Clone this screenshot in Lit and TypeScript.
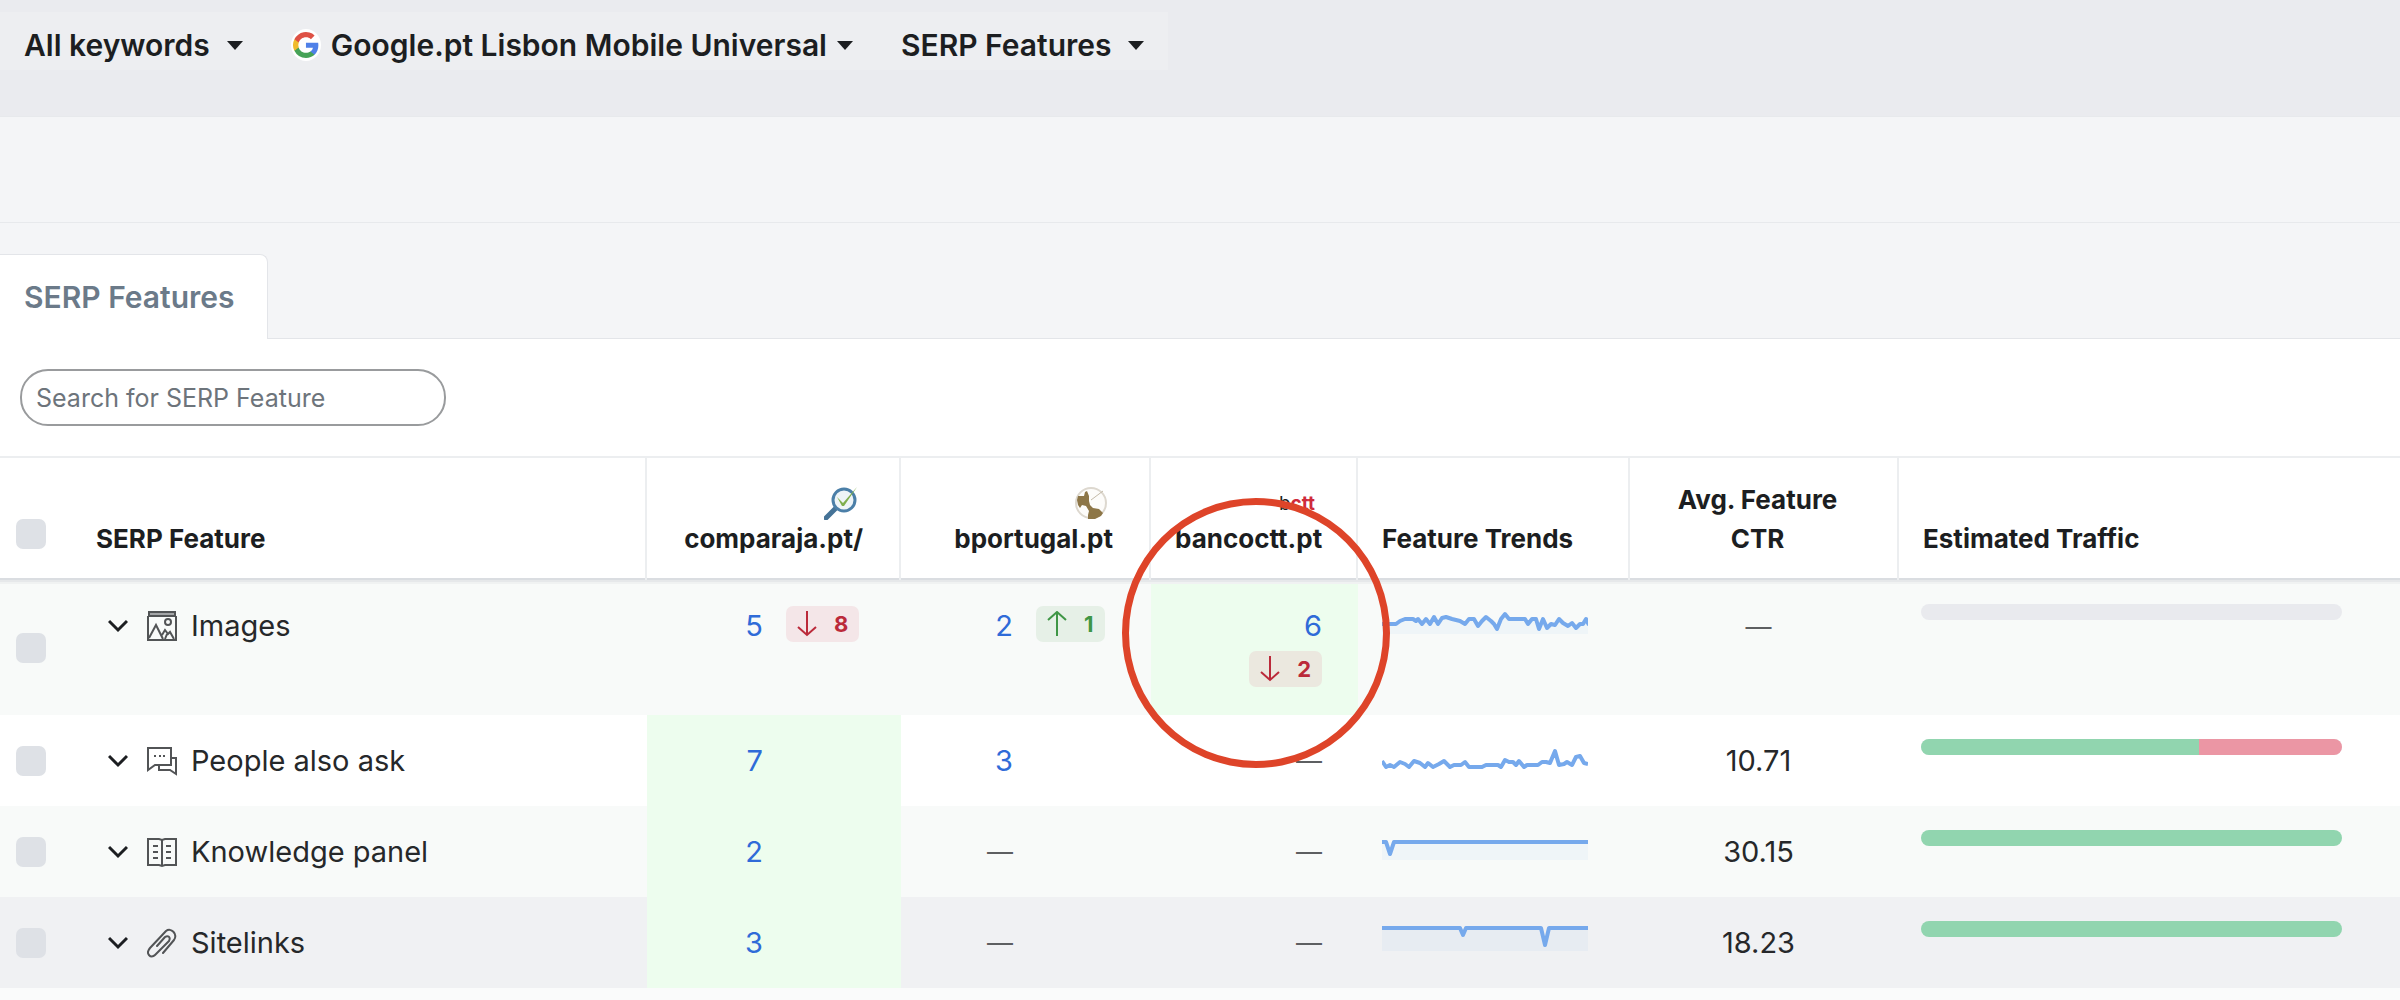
import { LitElement, html, css, svg, nothing } from "lit";
import { customElement, state } from "lit/decorators.js";

type Delta = { dir: "up" | "down"; value: number };
type Rank = { value: number | null; delta?: Delta; best?: boolean };
type Row = {
  name: string;
  icon: "images" | "ask" | "book" | "clip";
  ranks: Rank[];
  trend: string;
  fill: boolean;
  ctr: string | null;
  traffic: { tone: "good" | "bad"; share: number }[];
  tone?: "tint" | "hover";
};

const rows: Row[] = [
  {
    name: "Images",
    icon: "images",
    ranks: [
      { value: 5, delta: { dir: "down", value: 8 } },
      { value: 2, delta: { dir: "up", value: 1 } },
      { value: 6, delta: { dir: "down", value: 2 }, best: true },
    ],
    trend:
      "0,30 14,30 18,27 23,25 31,25 34,27 36,25 40,30 44,25 48,30 52,23 56,30 60,24 64,23 70,25 78,27 83,30 87,25 92,25 96,32 100,27 104,23 109,27 112,30 115,35 119,25 123,20 127,25 143,25 146,30 150,25 154,25 157,35 161,25 165,34 169,30 173,31 177,25 181,29 186,32 190,29 194,34 198,30 201,30 204,25 207,31",
    fill: true,
    ctr: null,
    traffic: [],
    tone: "tint",
  },
  {
    name: "People also ask",
    icon: "ask",
    ranks: [{ value: 7, best: true }, { value: 3 }, { value: null }],
    trend:
      "0,32 4,38 8,36 12,38 18,33 23,35 27,38 32,32 38,34 43,38 46,34 51,38 57,35 62,32 68,38 72,36 79,36 83,33 87,38 100,38 104,36 116,36 119,38 123,31 127,33 131,33 134,36 137,32 142,38 145,36 156,36 160,33 164,33 168,34 173,22 177,36 182,35 185,33 190,36 194,28 198,27 202,34 206,35",
    fill: false,
    ctr: "10.71",
    traffic: [
      { tone: "good", share: 66 },
      { tone: "bad", share: 34 },
    ],
  },
  {
    name: "Knowledge panel",
    icon: "book",
    ranks: [{ value: 2, best: true }, { value: null }, { value: null }],
    trend: "0,22 4,22 8,34 12,22 206,22",
    fill: true,
    ctr: "30.15",
    traffic: [{ tone: "good", share: 100 }],
    tone: "tint",
  },
  {
    name: "Sitelinks",
    icon: "clip",
    ranks: [{ value: 3, best: true }, { value: null }, { value: null }],
    trend: "0,17 78,17 81,24 84,17 159,17 163,34 167,17 206,17",
    fill: true,
    ctr: "18.23",
    traffic: [{ tone: "good", share: 100 }],
    tone: "hover",
  },
];

const icons = {
  images: svg`<g fill="none" stroke="currentColor" stroke-width="2">
    <path d="M2 1h26v4H2z" fill="#a3a5a7" /><path d="M1 5v24h28V5" />
    <circle cx="21" cy="11" r="3" /><path d="M2 27l7-13 7 14M15 24l3-5 3 4 2-2 4 7M18 28l2-5" />
  </g>`,
  ask: svg`<g fill="none" stroke="currentColor" stroke-width="2">
    <path d="M1 2h23v17H8l-7 5z" /><path d="M24 12h5v16l-6-4H12v-4" />
    <path d="M7 10h2M12 10h2M16 10h2" />
  </g>`,
  book: svg`<g fill="none" stroke="currentColor" stroke-width="2">
    <path d="M1 2h11l3 1 3-1h11v26H18l-3 1-3-1H1zM15 3v26" />
    <path d="M6 9h5M6 15h5M6 21h5M19 9h5M19 15h5M19 21h5" />
  </g>`,
  clip: svg`<path fill="none" stroke="currentColor" stroke-width="2" stroke-linecap="round" stroke-linejoin="round"
    d="M16 25L27 12c4-6-3-13-8-9L3 20c-5 6 1 11 5 7L22 13c2-4-1-6-4-4L10 18" />`,
};

@customElement("app-root")
export class AppRoot extends LitElement {
  @state() private query = "";

  static styles = css`
    :host {
      display: block;
      min-height: 100vh;
      background: #fafbfb;
      color: #1c1e21;
      font-family: Inter, "Liberation Sans", sans-serif;
      font-size: 29px;
      line-height: 36px;
    }
    * { box-sizing: border-box; }
    button, input { font: inherit; color: inherit; margin: 0; }
    button { border: 0; background: none; padding: 0; cursor: pointer; }
    svg { display: block; flex: none; }

    .filters {
      display: flex;
      padding: 12px 0 46px;
      background: #eaebef;
    }
    .filter {
      display: flex;
      align-items: center;
      gap: 17px;
      height: 58px;
      padding: 8px 24px 0;
      background: #edeef1;
      font-weight: 600;
      font-size: 30px;
      white-space: nowrap;
    }
    .filter.engine { gap: 10px; }
    .band { height: 107px; background: #f4f5f7; border: solid #e7e9ec; border-width: 1px 0; }
    .tabs {
      display: flex;
      padding-top: 31px;
      background: #f4f5f7;
      box-shadow: inset 0 -1px #e3e5e9;
    }
    .tab {
      height: 85px;
      padding: 0 32px 0 24px;
      border: 1px solid #e3e5e9;
      border-width: 1px 1px 0 0;
      border-radius: 0 8px 0 0;
      background: #fff;
      color: #6b7a89;
      font-size: 30px;
      font-weight: 600;
    }
    .search { padding: 30px 20px; background: #fff; }
    .search input {
      display: block;
      width: 426px;
      height: 57px;
      padding: 0 14px;
      border: 2px solid #999b9d;
      border-radius: 28px;
      background: #fff;
      font-size: 25px;
      outline: 0;
    }
    .search input::placeholder { color: #6d747b; opacity: 1; }

    table {
      width: 100%;
      table-layout: fixed;
      border-collapse: separate;
      border-spacing: 0;
    }
    .c-check { width: 96px; }
    .c-name { width: 551px; }
    .c-a { width: 254px; }
    .c-b { width: 250px; }
    .c-c { width: 207px; }
    .c-trend { width: 272px; }
    .c-ctr { width: 269px; }
    th {
      position: relative;
      z-index: 1;
      height: 124px;
      padding: 20px 36px 22px 24px;
      border: solid #eceef0;
      border-width: 2px 2px 0 0;
      background: linear-gradient(to top, #dadde1 2px, #fff 2px) border-box;
      box-shadow: 0 2px #e6e8ea, 0 4px #f0f2f2;
      font-size: 26px;
      line-height: 39px;
      font-weight: 700;
      text-align: left;
      vertical-align: bottom;
      white-space: nowrap;
    }
    th.rank { text-align: right; }
    th.marked { z-index: 2; }
    th.ctr { text-align: center; white-space: normal; }
    th:first-child, th:last-child { border-right: 0; }
    .favicon { display: flex; justify-content: flex-end; padding-right: 5px; height: 33px; }
    .wordmark { padding-top: 1px; font-size: 19px; line-height: 33px; font-weight: 400; }
    .wordmark b { color: #cf2b3a; }
    th.check, td.check { padding: 0 0 0 16px; vertical-align: middle; }
    th.check { padding-top: 30px; }
    th.name { padding-left: 0; }
    .box {
      display: block;
      appearance: none;
      width: 30px;
      height: 30px;
      margin: 0;
      border-radius: 7px;
      background: #dee1e6;
    }
    .box:checked { background: #3b72dd; }
    .ring {
      position: absolute;
      top: 40px;
      left: -29px;
      width: 268px;
      height: 270px;
      border: 7px solid #de4429;
      border-radius: 50%;
      pointer-events: none;
    }

    td { height: 91px; padding: 28px 36px 0 24px; vertical-align: top; background: #fff; }
    .tint td { background: #f8faf9; }
    .hover td { background: #f0f1f3; }
    tr td.best { background: #edfdee; }
    td.name { padding-left: 12px; }
    .feature { display: flex; align-items: center; }
    .feature button { display: flex; margin-right: 19px; }
    .feature svg + span { margin-left: 14px; }
    .glyph { color: #525456; }
    .feature, td.ctr { color: #26282a; }
    .position { display: grid; grid-template-columns: 1fr 79px; column-gap: 23px; justify-items: end; }
    .position.stacked { grid-template-columns: 1fr; row-gap: 7px; }
    .stacked .delta { justify-self: end; margin: 0 0 28px; }
    .position a { color: #2f6bd8; text-decoration: none; }
    .dash { color: #5d5f61; font-size: 26px; }
    .delta {
      display: flex;
      align-items: center;
      justify-self: start;
      gap: 17px;
      height: 36px;
      margin-top: -2px;
      padding: 0 11px;
      border-radius: 7px;
      font-size: 22px;
      font-weight: 700;
    }
    .delta.down { background: #f4e6e8; color: #bb2a3a; }
    .delta.up { background: #e6f0e7; color: #3f9646; }
    .best .delta.down { background: #ebe8df; }
    td.ctr { text-align: center; }
    td.trend { padding-top: 14px; padding-right: 0; }
    td.traffic { padding: 24px 58px 0 22px; }
    .bar {
      display: flex;
      height: 16px;
      border-radius: 8px;
      overflow: hidden;
      background: #e9eaee;
    }
    .good { background: #91d5af; }
    .bad { background: #eb96a4; }
  `;

  private caret() {
    return html`<svg width="16" height="9" viewBox="0 0 16 9" aria-hidden="true">
      <path d="M0 0h16L8 9z" fill="#1c1e21" />
    </svg>`;
  }

  private google() {
    return html`<svg width="30" height="32" viewBox="0 0 30 32" aria-hidden="true">
      <ellipse cx="15" cy="16" rx="15" ry="16" fill="#fff" />
      <g transform="translate(2 3) scale(1.08)">
        <path fill="#4f80e8" d="M23.5 12.3c0-.8-.1-1.6-.2-2.3H12v4.5h6.5a5.5 5.5 0 0 1-2.400 3.600v3h3.900c2.300-2.100 3.500-5.200 3.500-8.800z" />
        <path fill="#46a257" d="M12 24c3.200 0 6-1.100 8-2.900l-3.900-3c-1.100.7-2.500 1.200-4.100 1.200-3.100 0-5.800-2.100-6.700-5H1.300v3.100A12 12 0 0 0 12 24z" />
        <path fill="#f0bb2c" d="M5.300 14.300a7.200 7.200 0 0 1 0-4.600V6.600h-4a12 12 0 0 0 0 10.800z" />
        <path fill="#de5145" d="M12 4.800c1.800 0 3.300.6 4.600 1.800L20 3.200A12 12 0 0 0 1.300 6.600l4 3.100c.9-2.900 3.600-4.900 6.700-4.900z" />
      </g>
    </svg>`;
  }

  private delta(d: Delta) {
    const path = d.dir === "down" ? "M10 0v24M1 16l9 8 9-8" : "M10 25V1M1 9l9-8 9 8";
    return html`<span class="delta ${d.dir}">
      <svg width="20" height="26" viewBox="0 0 20 26" role="img" aria-label=${d.dir}>
        <path d=${path} fill="none" stroke="currentColor" stroke-width="2" />
      </svg>${d.value}</span>`;
  }

  private rank(r: Rank, stacked: boolean) {
    return html`<td class=${r.best ? "best" : ""}>
      <div class="position ${stacked ? "stacked" : ""}">
        ${r.value === null ? html`<span class="dash">—</span>` : html`<a href="#">${r.value}</a>`}
        ${r.delta ? this.delta(r.delta) : nothing}
      </div>
    </td>`;
  }

  private row(r: Row) {
    return html`<tr class=${r.tone ?? ""}>
      <td class="check"><input class="box" type="checkbox" aria-label="Select ${r.name}" /></td>
      <td class="name">
        <div class="feature">
          <button aria-label="Expand ${r.name}">
            <svg width="20" height="14" viewBox="0 0 20 14">
              <path d="M1 2l9 9 9-9" fill="none" stroke="#1c1e21" stroke-width="3" />
            </svg>
          </button>
          <svg class="glyph" width="30" height="31" viewBox="0 0 30 31" aria-hidden="true">${icons[r.icon]}</svg>
          <span>${r.name}</span>
        </div>
      </td>
      ${r.ranks.map((k, i) => this.rank(k, i === 2))}
      <td class="trend">
        <svg width="206" height="40" viewBox="0 0 206 40" role="img" aria-label="Trend for ${r.name}">
          ${r.fill ? svg`<polygon points="0,40 ${r.trend} 206,40" fill="#6ea5ee" opacity=".06" />` : nothing}
          <polyline points=${r.trend} fill="none" stroke="#76a9ec" stroke-width="4" stroke-linejoin="round" />
        </svg>
      </td>
      <td class="ctr">${r.ctr ?? html`<span class="dash">—</span>`}</td>
      <td class="traffic">
        <div class="bar">
          ${r.traffic.map((t) => html`<span class=${t.tone} style="width:${t.share}%"></span>`)}
        </div>
      </td>
    </tr>`;
  }

  render() {
    const q = this.query.trim().toLowerCase();
    return html`
      <header class="filters">
        <button class="filter">All keywords ${this.caret()}</button>
        <button class="filter engine">${this.google()} Google.pt Lisbon Mobile Universal ${this.caret()}</button>
        <button class="filter">SERP Features ${this.caret()}</button>
      </header>
      <div class="band"></div>
      <nav class="tabs"><button class="tab">SERP Features</button></nav>
      <div class="search">
        <input
          type="text"
          aria-label="Search for SERP Feature"
          placeholder="Search for SERP Feature"
          .value=${this.query}
          @input=${(e: Event) => (this.query = (e.target as HTMLInputElement).value)}
        />
      </div>
      <table>
        <colgroup>
          <col class="c-check" /><col class="c-name" /><col class="c-a" /><col class="c-b" />
          <col class="c-c" /><col class="c-trend" /><col class="c-ctr" /><col />
        </colgroup>
        <thead>
          <tr>
            <th class="check"><input class="box" type="checkbox" aria-label="Select all" /></th>
            <th class="name">SERP Feature</th>
            <th class="rank">
              <div class="favicon">
                <svg width="34" height="34" viewBox="0 0 34 34" aria-hidden="true">
                  <path d="M2 32l10-10" stroke="#457397" stroke-width="5" stroke-linecap="round" />
                  <circle cx="20" cy="14" r="11" fill="#eef4f7" stroke="#4b7fa8" stroke-width="3" />
                  <path d="M13 11l6 6L33 1 20 20h-2z" fill="#7fae4e" />
                </svg>
              </div>
              comparaja.pt/
            </th>
            <th class="rank">
              <div class="favicon">
                <svg width="34" height="34" viewBox="0 0 34 34" aria-hidden="true">
                  <circle cx="17" cy="17" r="15" fill="#fdfcfa" stroke="#ddd8cf" stroke-width="2" />
                  <path fill="#8d7647" d="M4 10l6 0 1-4 2-1 2 5 0 5 1 4 3 3 6 1 4 4-2 3-6 3-7 0 0-4 1-4-3-5-4-1-2 3-2-3-1-5z" />
                  <path d="M17 14L29 5" stroke="#c4baa8" stroke-width="1" />
                </svg>
              </div>
              bportugal.pt
            </th>
            <th class="rank marked">
              <div class="favicon wordmark">b<b>ctt</b></div>
              bancoctt.pt
              <span class="ring" aria-hidden="true"></span>
            </th>
            <th>Feature Trends</th>
            <th class="ctr">Avg. Feature CTR</th>
            <th>Estimated Traffic</th>
          </tr>
        </thead>
        <tbody>
          ${rows.filter((r) => r.name.toLowerCase().includes(q)).map((r) => this.row(r))}
        </tbody>
      </table>
    `;
  }
}
